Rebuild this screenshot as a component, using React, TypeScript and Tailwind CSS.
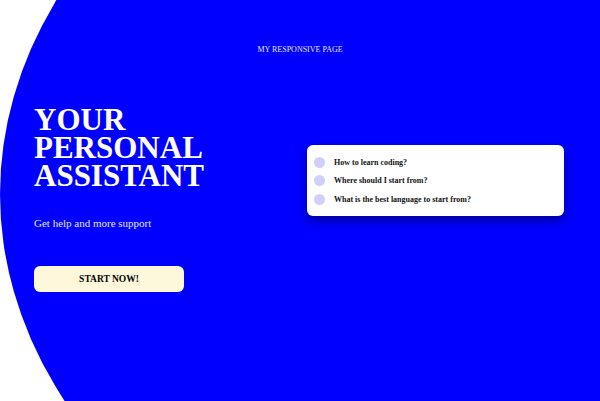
import React from "react";

const questions = [
  "How to learn coding?",
  "Where should I start from?",
  "What is the best language to start from?",
];

export default function App() {
  return (
    <div className="relative h-[401px] w-full overflow-hidden bg-white font-['Liberation_Serif',serif]">
      {/* big blue backdrop */}
      <div className="absolute left-0 top-[-306px] h-[1000px] w-[1440px] rounded-[50%] bg-[#0000ff]" />

      <div className="relative flex flex-col">
        <header className="pt-[45px] text-center text-[8px] leading-[10px] text-[#e6e6ff]">
          MY RESPONSIVE PAGE
        </header>

        <main className="flex items-start pl-[34px]">
          {/* Hero */}
          <section className="flex w-[273px] flex-col items-start">
            <h1 className="mt-[51px] text-[31px] font-bold leading-[28px] text-white">
              YOUR
              <br />
              PERSONAL
              <br />
              ASSISTANT
            </h1>
            <p className="mt-[27px] text-[11px] leading-[13px] text-[#e6e6ff]">
              Get help and more support
            </p>
            <button className="mt-[36px] flex h-[26px] w-[150px] items-center justify-center rounded-[6px] bg-[#fdf8dc] text-[9.5px] font-bold text-black">
              START NOW!
            </button>
          </section>

          {/* Questions card */}
          <div className="mt-[90px] flex w-[257px] flex-col gap-[7.5px] rounded-[6px] bg-white px-[7px] py-[11.5px] shadow-[0_5px_10px_rgba(0,0,60,0.5)]">
            {questions.map((q) => (
              <div key={q} className="flex h-[11px] items-center gap-[9px]">
                <span className="h-[11px] w-[11px] shrink-0 rounded-full bg-[#d0d0fa]" />
                <span className="text-[8px] font-bold leading-[11px] text-[#111]">{q}</span>
              </div>
            ))}
          </div>
        </main>
      </div>
    </div>
  );
}
